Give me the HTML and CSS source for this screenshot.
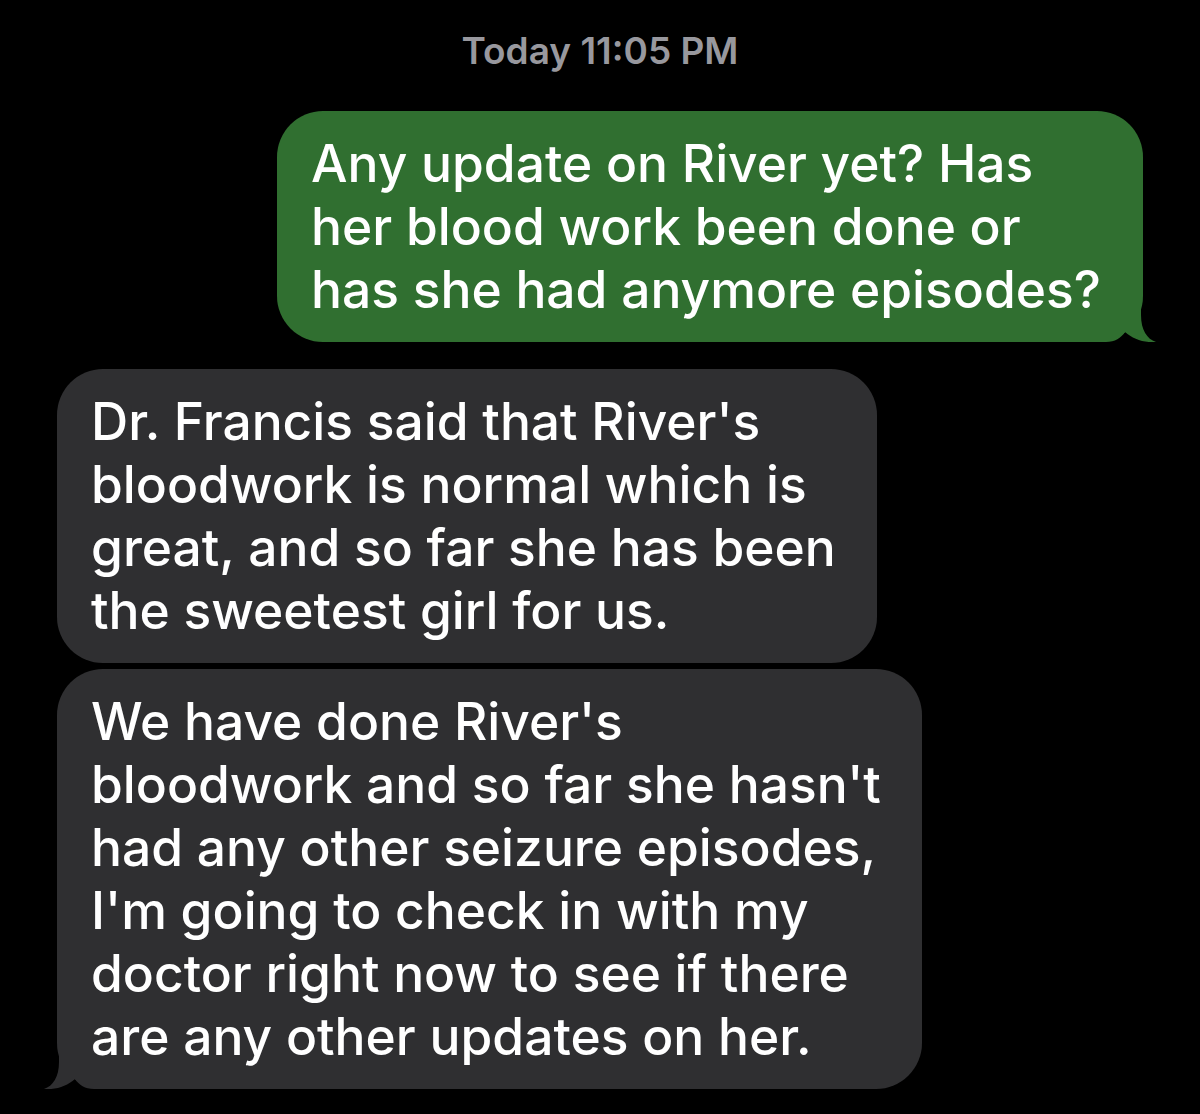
FILE: index.html
```html
<!DOCTYPE html>
<html>
<head>
<meta charset="utf-8">
<link rel="stylesheet" href="styles.css">
</head>
<body>
<div class="thread">
  <div class="stamp">Today 11:05 PM</div>
  <div class="bubble sent">
    <svg class="tail" viewBox="0 0 60 47" width="60" height="47"><path d="M0,0 L43,0 L43,20 C43,35 49,44 58,47 C46,48 35,44 27,37 C23,43 17,47 8,47 L0,47 Z"/></svg>
    <span class="text">Any update on River yet? Has<br>her blood work been done or<br>has she had anymore episodes?</span>
  </div>
  <div class="bubble recv first">
    <span class="text">Dr. Francis said that River's<br>bloodwork is normal which is<br>great, and so far she has been<br>the sweetest girl for us.</span>
  </div>
  <div class="bubble recv second">
    <svg class="tail" viewBox="0 0 60 47" width="60" height="47"><path d="M0,0 L43,0 L43,20 C43,35 49,44 58,47 C46,48 35,44 27,37 C23,43 17,47 8,47 L0,47 Z"/></svg>
    <span class="text">We have done River's<br>bloodwork and so far she hasn't<br>had any other seizure episodes,<br>I'm going to check in with my<br>doctor right now to see if there<br>are any other updates on her.</span>
  </div>
</div>
</body>
</html>
```
FILE: styles.css
```css
html, body {
  margin: 0;
  padding: 0;
  background: #000;
}
body {
  width: 1200px;
  height: 1114px;
  overflow: hidden;
  font-family: Inter, "Liberation Sans", sans-serif;
}
.thread {
  display: flex;
  flex-direction: column;
  padding: 0 57px;
}
.stamp {
  align-self: center;
  margin-top: 30px;
  height: 42px;
  line-height: 42px;
  color: #98989e;
  font-size: 37px;
  font-weight: 600;
}
.bubble {
  position: relative;
  box-sizing: border-box;
  border-radius: 46px;
  color: #fff;
  font-size: 51.5px;
  font-weight: 500;
  line-height: 63px;
  padding: 21px 0 21px 34px;
}
.bubble .text {
  position: relative;
}
.bubble .tail {
  position: absolute;
  bottom: 0;
  display: block;
}
.sent {
  align-self: flex-end;
  width: 866px;
  margin-top: 39px;
  background: #306f30;
}
.sent .tail {
  right: -15px;
  fill: #306f30;
}
.recv {
  align-self: flex-start;
  background: #2f2f31;
}
.recv .tail {
  left: -15px;
  fill: #2f2f31;
  transform: scaleX(-1);
}
.first {
  width: 820px;
  margin-top: 27px;
}
.second {
  width: 865px;
  margin-top: 6px;
}
```
